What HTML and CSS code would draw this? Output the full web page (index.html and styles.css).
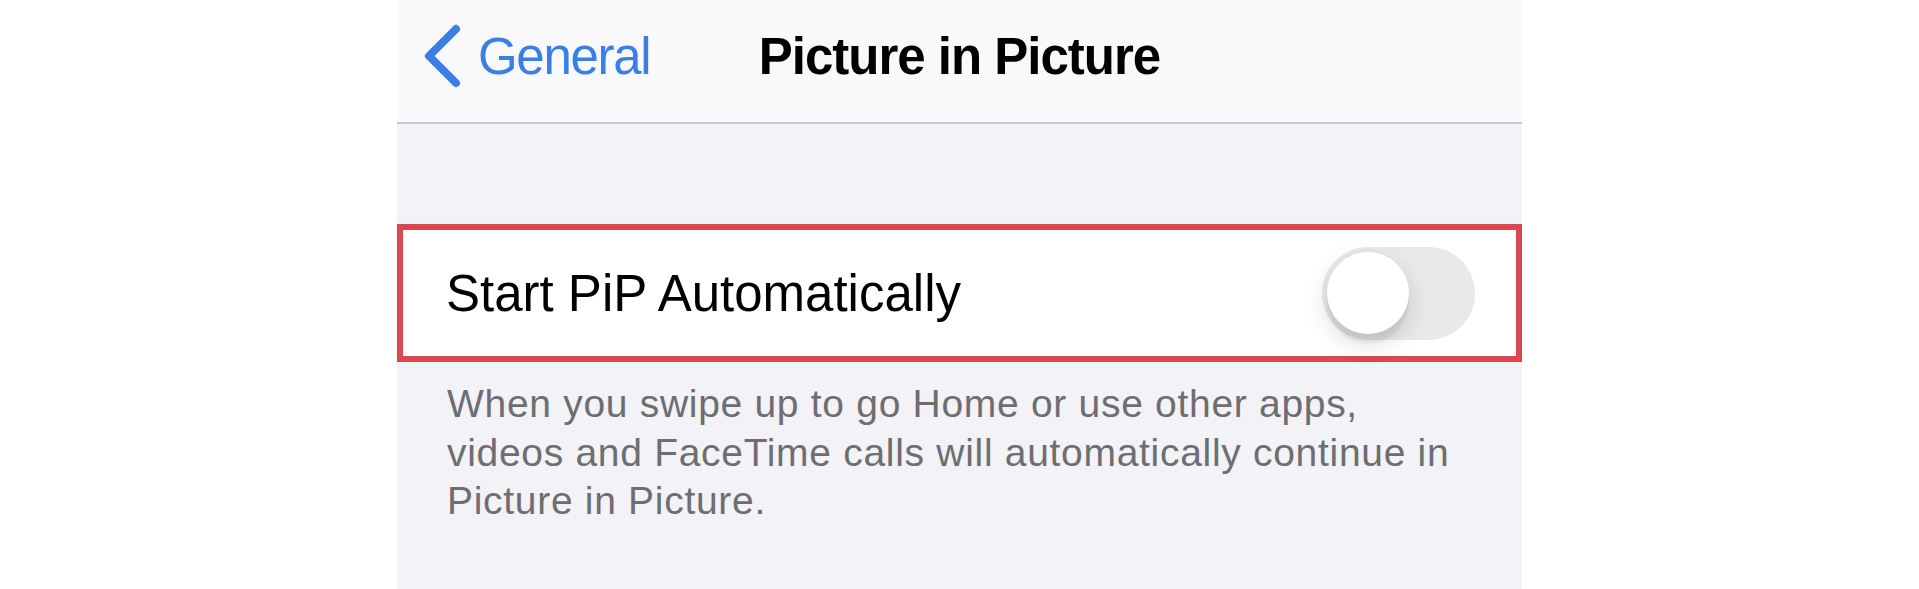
FILE: index.html
```html
<!DOCTYPE html>
<html lang="en">
    <head>
        <meta charset="UTF-8">
        <title>Picture in Picture</title>
        <link rel="stylesheet" href="styles.css">
    </head>
    <body>
        <div class="phone">

            <!-- navigation bar -->
            <div class="nav">
                <div class="back">
                    <svg class="chevron" width="40" height="64" viewBox="0 0 40 64">
                        <path d="M34 5 L7 32 L34 59" fill="none" stroke="#3b7fe4" stroke-width="8" stroke-linecap="round" stroke-linejoin="round"/>
                    </svg>
                    <span class="back-text">General</span>
                </div>
                <div class="title">Picture in Picture</div>
                <div></div>
            </div>

            <!-- settings group -->
            <div class="content">
                <div class="row">
                    <span class="label">Start PiP Automatically</span>
                    <div class="toggle">
                        <div class="knob"></div>
                    </div>
                </div>
                <p class="footer">
                    When you swipe up to go Home or use other apps,<br>
                    videos and FaceTime calls will automatically continue in<br>
                    Picture in Picture.
                </p>
            </div>

        </div>
    </body>
</html>
```

FILE: styles.css
```css
html, body {
    margin: 0;
    padding: 0;
    background-color: #ffffff;
    height: 100%;
}

body {
    font-family: "Liberation Sans", Arial, sans-serif;
    display: flex;
    justify-content: center;
}

.phone {
    width: 1125px;
    height: 589px;
    display: flex;
    flex-direction: column;
    background-color: #f2f2f7;
}

.nav {
    height: 112px;
    padding: 0 25px 10px 25px;
    display: grid;
    grid-template-columns: 1fr auto 1fr;
    align-items: center;
    background-color: #f9f9fb;
    border-bottom: 2px solid #c8c8cc;
}

.back {
    display: flex;
    align-items: center;
    gap: 16px;
}

.chevron {
    display: block;
}

.back-text {
    font-size: 51px;
    color: #3b7fe4;
    letter-spacing: -1.3px;
}

.title {
    font-size: 51px;
    font-weight: bold;
    color: #000;
    letter-spacing: -1px;
}

.content {
    padding-top: 100px;
}

.row {
    height: 138px;
    box-sizing: border-box;
    border: 6px solid #da4651;
    background-color: #ffffff;
    display: flex;
    align-items: center;
    justify-content: space-between;
    padding: 0 41px 0 43px;
}

.label {
    font-size: 51px;
    color: #000;
}

.toggle {
    width: 153px;
    height: 93px;
    box-sizing: border-box;
    border-radius: 47px;
    background-color: #e9e9eb;
    padding: 6px 5px;
    display: flex;
    align-items: center;
}

.knob {
    width: 82px;
    height: 82px;
    border-radius: 50%;
    background-color: #ffffff;
    box-shadow: 0 9px 24px rgba(0, 0, 0, 0.15), 0 9px 3px rgba(0, 0, 0, 0.06);
}

.footer {
    margin: 0;
    padding: 18px 0 0 50px;
    font-size: 39px;
    line-height: 48.5px;
    letter-spacing: 0.7px;
    color: #6d6d72;
}
```
